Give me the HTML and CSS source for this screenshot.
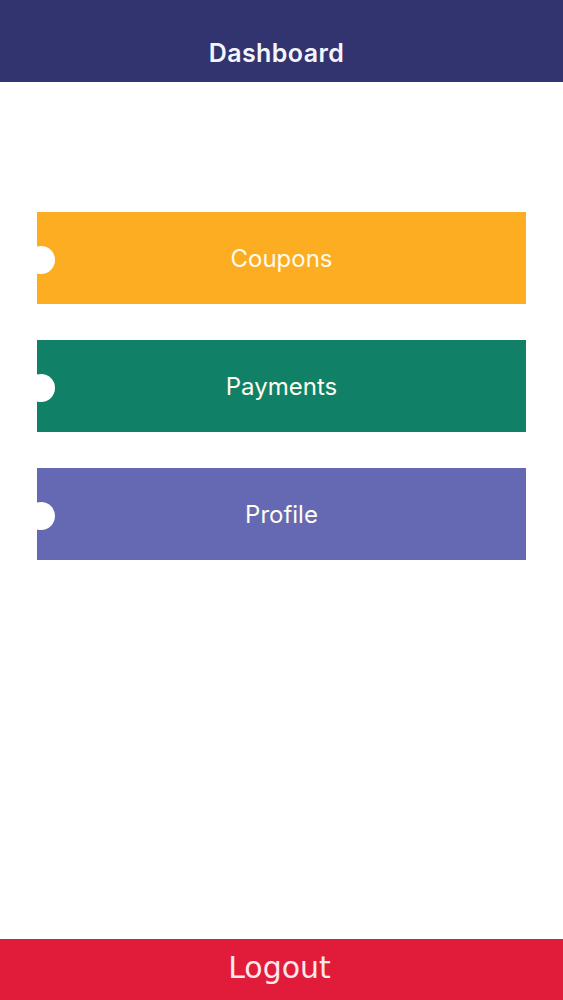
FILE: index.html
```html
<!DOCTYPE html>
<html lang="en">
<head>
    <meta charset="utf-8">
    <meta name="viewport" content="width=device-width, initial-scale=1.0">
    <title>Dashboard</title>
    <link rel="stylesheet" href="styles.css">
</head>
<body>
    <div class="app">
        <header class="topbar">
            <h1>Dashboard</h1>
        </header>
        <div class="menu">
            <a class="ticket ticket-coupons" href="#">Coupons</a>
            <a class="ticket ticket-payments" href="#">Payments</a>
            <a class="ticket ticket-profile" href="#">Profile</a>
        </div>
        <button class="logout">Logout</button>
    </div>
</body>
</html>
```

FILE: styles.css
```css
body {
    margin: 0;
    font-family: Inter, "Open Sans", sans-serif;
    background: #fff;
}
.app {
    display: flex;
    flex-direction: column;
    height: 1000px;
}
.topbar {
    height: 82px;
    background-color: #31346f;
    display: flex;
    align-items: flex-end;
    justify-content: center;
    box-sizing: border-box;
    padding: 0 10px 14px 0;
}
.topbar h1 {
    margin: 0;
    color: #f4f4fb;
    font-size: 25px;
    font-weight: 600;
    letter-spacing: 0.4px;
    line-height: 30px;
}
.menu {
    display: flex;
    flex-direction: column;
    gap: 36px;
    padding: 130px 37px 0;
}
.ticket {
    position: relative;
    height: 92px;
    display: flex;
    align-items: center;
    justify-content: center;
    color: #fffbee;
    font-size: 24px;
    text-decoration: none;
    overflow: hidden;
}
.ticket::before {
    content: "";
    position: absolute;
    left: -10px;
    top: 34px;
    width: 28px;
    height: 28px;
    border-radius: 50%;
    background: #fff;
}
.ticket-coupons { background-color: #fdad22; }
.ticket-payments { background-color: #108167; }
.ticket-profile { background-color: #6569b3; }
.logout {
    margin-top: auto;
    height: 61px;
    border: none;
    background-color: #e11b3a;
    color: #fde8ec;
    font-family: "DejaVu Sans", Verdana, sans-serif;
    font-size: 30px;
    padding: 0 4px 4px 0;
    cursor: pointer;
}
```
